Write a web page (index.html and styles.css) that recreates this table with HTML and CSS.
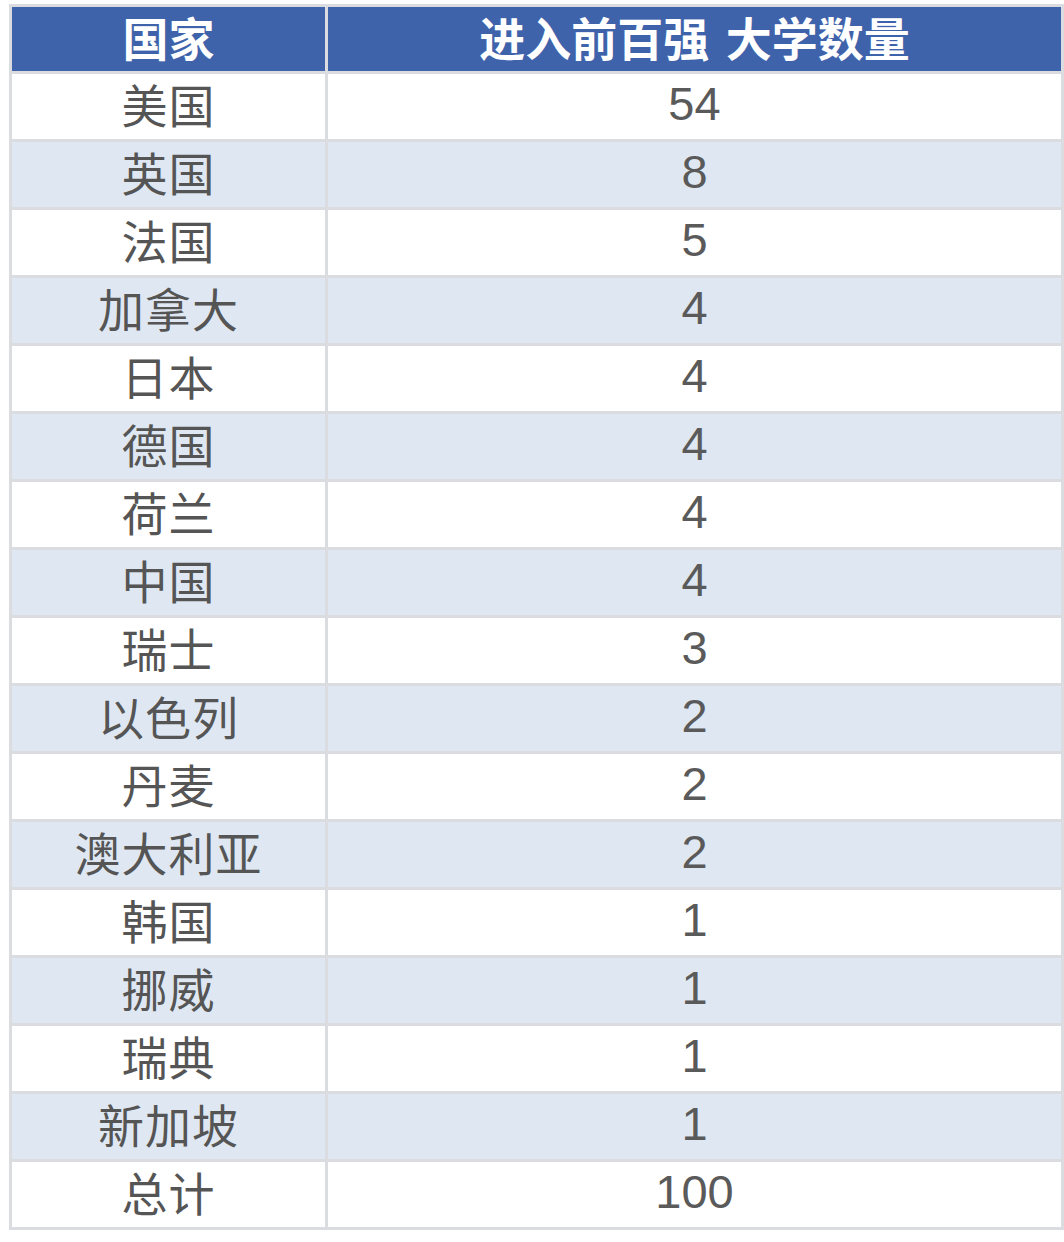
FILE: index.html
```html
<!DOCTYPE html>
<html lang="zh">
<head>
<meta charset="utf-8">
<title>进入前百强大学数量</title>
<link rel="stylesheet" href="styles.css">
</head>
<body>
<div class="table">
  <div class="cell head">国家</div>
  <div class="cell head">进入前百强 大学数量</div>

  <div class="cell">美国</div><div class="cell num">54</div>
  <div class="cell alt">英国</div><div class="cell num alt">8</div>
  <div class="cell">法国</div><div class="cell num">5</div>
  <div class="cell alt">加拿大</div><div class="cell num alt">4</div>
  <div class="cell">日本</div><div class="cell num">4</div>
  <div class="cell alt">德国</div><div class="cell num alt">4</div>
  <div class="cell">荷兰</div><div class="cell num">4</div>
  <div class="cell alt">中国</div><div class="cell num alt">4</div>
  <div class="cell">瑞士</div><div class="cell num">3</div>
  <div class="cell alt">以色列</div><div class="cell num alt">2</div>
  <div class="cell">丹麦</div><div class="cell num">2</div>
  <div class="cell alt">澳大利亚</div><div class="cell num alt">2</div>
  <div class="cell">韩国</div><div class="cell num">1</div>
  <div class="cell alt">挪威</div><div class="cell num alt">1</div>
  <div class="cell">瑞典</div><div class="cell num">1</div>
  <div class="cell alt">新加坡</div><div class="cell num alt">1</div>
  <div class="cell">总计</div><div class="cell num">100</div>
</div>
</body>
</html>
```

FILE: styles.css
```css
html, body {
  margin: 0;
  padding: 0;
  background: #ffffff;
}

body {
  padding: 4px 0 0 9px;
  font-family: "Liberation Sans", "Noto Sans CJK SC", sans-serif;
}

.table {
  display: grid;
  grid-template-columns: 313px 733px;
  grid-template-rows: 64px repeat(17, 65px);
  gap: 3px;
  padding: 3px;
  width: 1049px;
  background: #dadcdf;
}

.cell {
  display: flex;
  align-items: center;
  justify-content: center;
  padding-bottom: 8px;
  box-sizing: border-box;
  background: #ffffff;
  color: #555555;
  font-family: "Noto Sans CJK SC", sans-serif;
  font-size: 46px;
  line-height: 1;
  letter-spacing: 1px;
}

.cell.alt {
  background: #dfe8f2;
}

.cell.num {
  font-family: "Liberation Sans", "Noto Sans CJK SC", sans-serif;
  font-size: 47px;
  letter-spacing: 0;
  color: #5a5a5a;
  padding-bottom: 6px;
}

.cell.head {
  background: #3f63ab;
  color: #ffffff;
  font-weight: 700;
  font-size: 46px;
  letter-spacing: 0;
  word-spacing: 6px;
  padding-bottom: 6px;
}
```
